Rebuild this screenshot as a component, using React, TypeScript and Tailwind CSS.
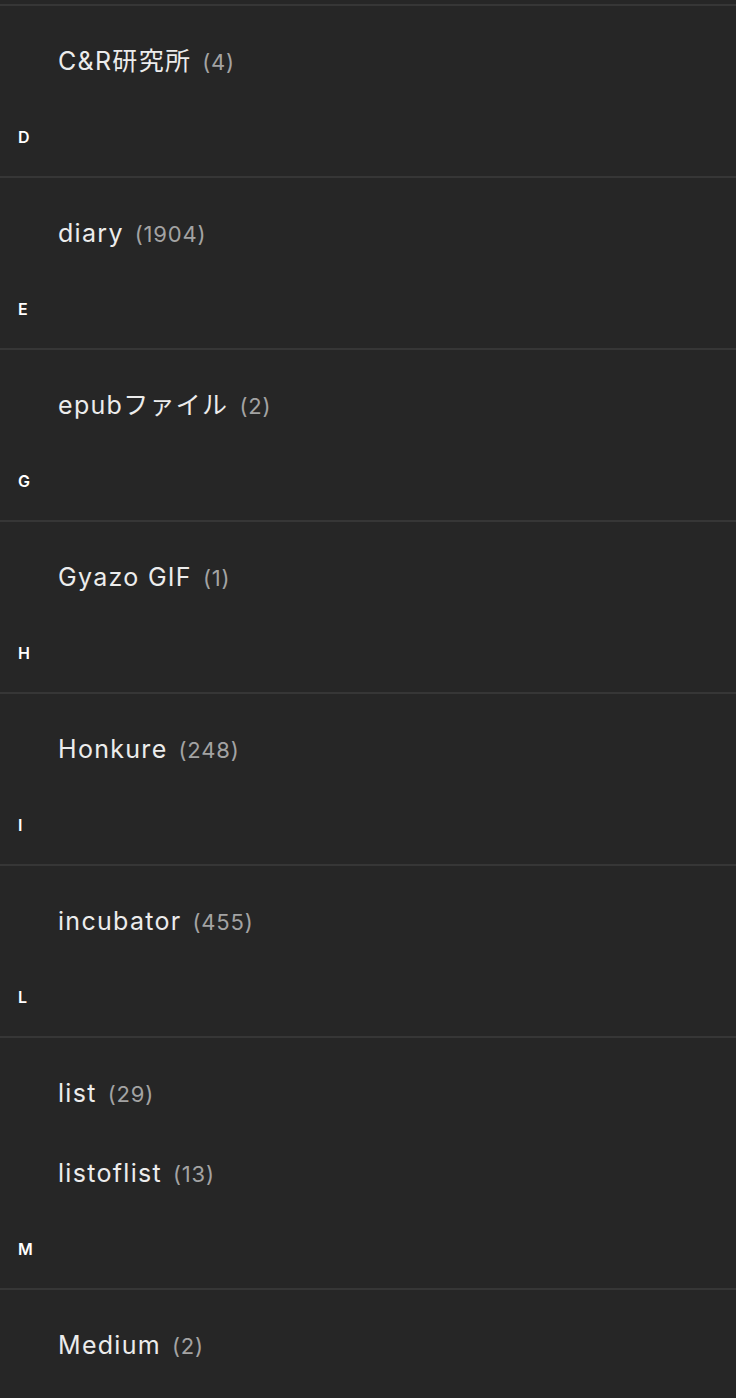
import React from "react";

type Section = { letter: string | null; items: { name: string; count: number }[] };

const sections: Section[] = [
  { letter: null, items: [{ name: "C&R研究所", count: 4 }] },
  { letter: "D", items: [{ name: "diary", count: 1904 }] },
  { letter: "E", items: [{ name: "epubファイル", count: 2 }] },
  { letter: "G", items: [{ name: "Gyazo GIF", count: 1 }] },
  { letter: "H", items: [{ name: "Honkure", count: 248 }] },
  { letter: "I", items: [{ name: "incubator", count: 455 }] },
  { letter: "L", items: [
    { name: "list", count: 29 },
    { name: "listoflist", count: 13 },
  ] },
  { letter: "M", items: [{ name: "Medium", count: 2 }] },
];

export default function App() {
  return (
    <div
      className="min-h-screen w-full bg-[#262626] text-[#ececec] overflow-hidden"
      style={{ fontFamily: 'Inter, "Noto Sans CJK JP", sans-serif' }}
    >
      <div className="h-[4px]" />
      {sections.map((s, i) => (
        <div key={i}>
          {s.letter && (
            <div className="h-[74px] pl-[18px] pt-[23px] text-[16px] leading-[24px] font-semibold text-white">
              {s.letter}
            </div>
          )}
          <div className="border-t-2 border-[#363636] pt-[16px]">
            {s.items.map((it) => (
              <div key={it.name} className="h-[80px] flex items-center pl-[58px]">
                <span className="text-[25px] tracking-[1.3px] text-[#ececec]">{it.name}</span>
                <span className="ml-[11px] text-[22px] tracking-[0.8px] text-[#a3a3a3]">({it.count})</span>
              </div>
            ))}
          </div>
        </div>
      ))}
    </div>
  );
}
